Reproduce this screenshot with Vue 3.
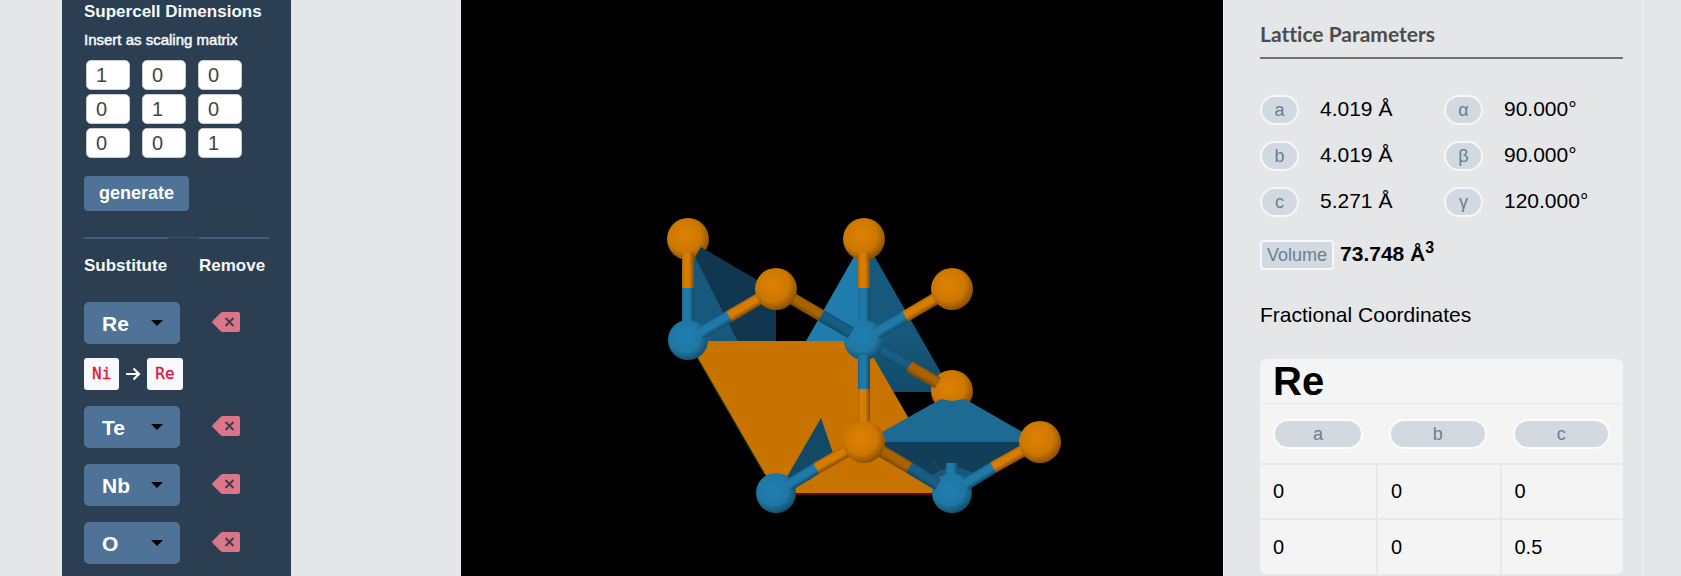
<script setup>
import { reactive } from 'vue'

const matrix = reactive([
  [1, 0, 0],
  [0, 1, 0],
  [0, 0, 1],
])

const elements = ['Re', 'Te', 'Nb', 'O', 'Ni']
const sites = reactive([
  { symbol: 'Re', from: 'Ni' },
  { symbol: 'Te' },
  { symbol: 'Nb' },
  { symbol: 'O' },
])

const lattice = [
  { edge: 'a', length: '4.019 Å', angle: 'α', degrees: '90.000°' },
  { edge: 'b', length: '4.019 Å', angle: 'β', degrees: '90.000°' },
  { edge: 'c', length: '5.271 Å', angle: 'γ', degrees: '120.000°' },
]

const coordinates = [
  ['0', '0', '0'],
  ['0', '0', '0.5'],
]

// Half bonds, atoms and faces in painting order, back to front.
const bond = (x1, y1, x2, y2, tone) => {
  const dx = x2 - x1
  const dy = y2 - y1
  return {
    kind: 'bond',
    x: x1,
    y: y1,
    length: Math.hypot(dx, dy),
    angle: (Math.atan2(dy, dx) * 180) / Math.PI,
    fill: `url(#bond-${tone})`,
  }
}
const atom = (x, y, tone) => ({ kind: 'atom', x, y, r: tone === 'orange' ? 21 : 20, fill: `url(#atom-${tone})` })
const face = (points, fill) => ({ kind: 'face', points, fill })

const scene = [
  face('694,254 738,341 688,341 688,254', '#17597d'),
  atom(688, 239, 'orange'),
  face('701,247 776,291 776,341 738,341 695,257', '#10374f'),
  face('864,239 864,341 806,341', '#1f7cac'),
  face('864,238 952,392 884,392 864,339', 'url(#face-right)'),
  face('688,341 864,341 952,493 776,493', '#c87300'),
  face('821,418 834,456 810,480 784,482', '#114966'),
  bond(688, 322, 688, 287, 'blue'),
  bond(688, 287, 688, 253, 'orange'),
  atom(688, 340, 'blue'),
  bond(701, 333, 730, 316, 'blue'),
  bond(730, 316, 764, 296, 'orange'),
  bond(788, 296, 822, 316, 'orange-dark'),
  atom(776, 289, 'orange'),
  atom(864, 239, 'orange'),
  bond(864, 324, 864, 287, 'blue'),
  bond(864, 287, 864, 253, 'orange'),
  bond(876, 347, 910, 367, 'blue-dark'),
  atom(864, 340, 'blue'),
  bond(822, 316, 851, 333, 'blue-dark'),
  bond(877, 333, 906, 316, 'blue'),
  bond(906, 316, 940, 296, 'orange'),
  atom(952, 289, 'orange'),
  atom(952, 391, 'orange'),
  bond(910, 367, 938, 383, 'orange-dark'),
  bond(864, 389, 864, 355, 'blue'),
  bond(864, 428, 864, 389, 'orange'),
  face('864,442 941,399 952,401 965,399 1040,442', '#1d6a93'),
  face('864,442 1040,442 952,493', '#113f5a'),
  face('932,475 952,465 976,474 964,485 940,485', '#17597d'),
  bond(952, 478, 952, 463, 'blue'),
  atom(776, 493, 'blue'),
  bond(789, 485, 817, 468, 'blue'),
  bond(817, 468, 852, 448, 'orange'),
  bond(876, 448, 910, 468, 'orange-dark'),
  atom(864, 442, 'orange'),
  atom(952, 493, 'blue'),
  bond(910, 468, 938, 485, 'blue-dark'),
  bond(966, 484, 994, 467, 'blue'),
  bond(994, 467, 1028, 448, 'orange'),
  atom(1040, 442, 'orange'),
]

const atomTones = [
  { id: 'atom-orange', light: '#df8200', mid: '#cc7700', dark: '#7c4800' },
  { id: 'atom-blue', light: '#217fb0', mid: '#1e77a5', dark: '#124763' },
]
const bondTones = [
  { id: 'bond-orange', edge: '#ad6500', light: '#d67c00', dark: '#824b00' },
  { id: 'bond-orange-dark', edge: '#8c5200', light: '#a86200', dark: '#7c4900' },
  { id: 'bond-blue', edge: '#196690', light: '#1f7aaa', dark: '#134c69' },
  { id: 'bond-blue-dark', edge: '#144f70', light: '#185e84', dark: '#124966' },
]
</script>

<template>
  <div class="page">
    <aside class="sidebar">
      <h2 class="side-title">Supercell Dimensions</h2>
      <p class="hint">Insert as scaling matrix</p>
      <div class="matrix">
        <template v-for="(row, r) in matrix" :key="r">
          <input
            v-for="(cell, c) in row"
            :key="c"
            v-model="matrix[r][c]"
            type="text"
            :aria-label="`Row ${r + 1}, column ${c + 1}`"
          />
        </template>
      </div>
      <button type="button" class="generate">generate</button>

      <div class="site-head">
        <h3>Substitute</h3>
        <h3>Remove</h3>
      </div>
      <div class="sites">
        <div v-for="(site, i) in sites" :key="i" class="site">
          <div class="site-row">
            <div class="picker">
              <select v-model="site.symbol" aria-label="Substitute element">
                <option v-for="name in elements" :key="name">{{ name }}</option>
              </select>
              <svg class="caret" viewBox="0 0 12 6" aria-hidden="true"><path d="M0 0h12L6 6z" /></svg>
            </div>
            <button type="button" class="remove" aria-label="Remove">
              <svg viewBox="0 0 28 20" aria-hidden="true">
                <path d="M11 0h15q2 0 2 2v16q0 2-2 2H11q-1.500 0-2.500-1L.6 11q-1-1 0-2L8.500 1Q9.500 0 11 0z" fill="#dc7587" />
                <path d="M13.500 6l8 8m0-8l-8 8" stroke="#3c3b50" stroke-width="1.800" />
              </svg>
            </button>
          </div>
          <div v-if="site.from" class="change">
            <code>{{ site.from }}</code>
            <svg viewBox="0 0 16 14" aria-hidden="true">
              <path d="M1 7h13M8.500 1.500L14 7l-5.500 5.500" fill="none" stroke="#fff" stroke-width="2.200" />
            </svg>
            <code>{{ site.symbol }}</code>
          </div>
        </div>
      </div>
    </aside>

    <main class="viewer">
      <svg viewBox="461 0 762 576" role="img" aria-label="Crystal structure">
        <defs>
          <radialGradient v-for="t in atomTones" :id="t.id" :key="t.id" cx="0.42" cy="0.4" r="0.66">
            <stop offset="0" :stop-color="t.light" />
            <stop offset="0.6" :stop-color="t.mid" />
            <stop offset="1" :stop-color="t.dark" />
          </radialGradient>
          <linearGradient v-for="t in bondTones" :id="t.id" :key="t.id" x1="0" y1="0" x2="0" y2="1">
            <stop offset="0" :stop-color="t.edge" />
            <stop offset="0.2" :stop-color="t.light" />
            <stop offset="0.6" :stop-color="t.light" />
            <stop offset="1" :stop-color="t.dark" />
          </linearGradient>
          <linearGradient id="face-right" x1="0" y1="0" x2="0" y2="1">
            <stop offset="0.6" stop-color="#16597c" />
            <stop offset="1" stop-color="#124b69" />
          </linearGradient>
        </defs>
        <template v-for="(s, i) in scene" :key="i">
          <circle v-if="s.kind === 'atom'" :cx="s.x" :cy="s.y" :r="s.r" :fill="s.fill" />
          <polygon v-else-if="s.kind === 'face'" :points="s.points" :fill="s.fill" />
          <rect
            v-else
            :transform="`translate(${s.x} ${s.y}) rotate(${s.angle})`"
            x="-1"
            y="-6"
            :width="s.length + 1"
            height="12"
            rx="1"
            :fill="s.fill"
          />
        </template>
        <path d="M698 359l67 116" stroke="#2a4a00" />
        <path d="M796 494h137" stroke="#961c00" />
        <path d="M933 460l10 17" stroke="#4a4a42" />
      </svg>
    </main>

    <section class="details">
      <h2 class="heading">Lattice Parameters</h2>
      <dl class="lattice">
        <div v-for="p in lattice" :key="p.edge" class="lattice-row">
          <div class="pair">
            <dt class="badge">{{ p.edge }}</dt>
            <dd>{{ p.length }}</dd>
          </div>
          <div class="pair">
            <dt class="badge">{{ p.angle }}</dt>
            <dd>{{ p.degrees }}</dd>
          </div>
        </div>
      </dl>
      <p class="volume">
        <span class="volume-label">Volume</span>
        <strong>73.748 Å<sup>3</sup></strong>
      </p>
      <h3 class="subheading">Fractional Coordinates</h3>
      <table class="coords">
        <colgroup>
          <col class="first" />
          <col />
          <col />
        </colgroup>
        <thead>
          <tr>
            <th colspan="3" class="species">Re</th>
          </tr>
          <tr class="axes">
            <th v-for="axis in ['a', 'b', 'c']" :key="axis"><span>{{ axis }}</span></th>
          </tr>
        </thead>
        <tbody>
          <tr v-for="(row, i) in coordinates" :key="i">
            <td v-for="(value, j) in row" :key="j">{{ value }}</td>
          </tr>
        </tbody>
      </table>
    </section>
  </div>
</template>

<style>
body {
  background: #e4e6e8;
}
</style>

<style scoped>
* {
  box-sizing: border-box;
}
.page {
  display: grid;
  grid-template-columns: 229px minmax(0, 1fr) 421px;
  padding: 0 37px 0 62px;
  min-height: 100vh;
  font-family: "Liberation Sans", Arial, sans-serif;
  color: #000;
}
h2,
h3,
p,
dl,
dd {
  margin: 0;
}
.sidebar {
  padding: 1px 22px 12px;
  background: #2c3e52;
  color: #f6f8fa;
}
.side-title,
.site-head h3 {
  font-size: 17px;
  line-height: 22px;
}
.hint {
  margin-top: 7px;
  font-size: 15px;
  line-height: 20px;
  white-space: nowrap;
  -webkit-text-stroke: 0.5px #f6f8fa;
}
.matrix {
  display: grid;
  grid-template-columns: repeat(3, 44px);
  gap: 4px 12px;
  margin: 10px 0 0 2px;
}
.matrix input {
  width: 100%;
  height: 30px;
  padding: 0 9px;
  border: 1px solid #ccc;
  border-radius: 5px;
  background: #fff;
  font: 20px "Liberation Sans", Arial, sans-serif;
  color: #444;
}
.generate {
  display: block;
  height: 35px;
  margin-top: 18px;
  padding: 0 15px;
  border: 0;
  border-radius: 4px;
  background: #4f7297;
  color: #fff;
  font: bold 18px "Liberation Sans", Arial, sans-serif;
}
.site-head {
  display: grid;
  grid-template-columns: 84px 70px;
  column-gap: 31px;
  margin-top: 26px;
  background: linear-gradient(#34516d, #34516d) top / 100% 1px no-repeat;
}
.site-head h3 {
  padding-top: 16px;
  border-top: 2px solid #3e5f80;
  white-space: nowrap;
}
.sites {
  display: grid;
  gap: 16px;
  margin-top: 25px;
}
.site-row {
  display: flex;
  align-items: center;
  gap: 32px;
}
.picker {
  position: relative;
  width: 96px;
}
.picker select {
  display: block;
  width: 100%;
  height: 42px;
  padding: 0 18px;
  border: 0;
  border-radius: 5px;
  appearance: none;
  background: #4f7297;
  color: #fff;
  font: bold 21px "Liberation Sans", Arial, sans-serif;
}
.caret {
  position: absolute;
  top: 18px;
  right: 17px;
  width: 12px;
  height: 6px;
  pointer-events: none;
}
.remove {
  padding: 0 0 3px;
  border: 0;
  background: none;
}
.remove svg {
  display: block;
  width: 28px;
  height: 20px;
}
.change {
  display: flex;
  align-items: center;
  gap: 6px;
  margin-top: 14px;
}
.change code {
  padding: 0 8px;
  border-radius: 3px;
  background: #f9f8fb;
  color: #e0123f;
  font: 16px/32px "DejaVu Sans Mono", monospace;
  -webkit-text-stroke: 0.3px #e0123f;
}
.change svg {
  width: 16px;
  height: 14px;
}
.viewer {
  margin-left: 170px;
  background: #000;
}
.viewer svg {
  display: block;
  width: 100%;
}
.details {
  padding: 20px 19px 0 36px;
  border-left: 1px solid #f2f3f4;
  border-right: 2px solid #ebecec;
}
.heading {
  padding-bottom: 9px;
  border-bottom: 2px solid #6d7272;
  color: #4b4c4e;
  font: bold 21px/28px Lato, sans-serif;
  font-variant-ligatures: none;
}
.lattice {
  display: grid;
  gap: 16px;
  margin-top: 36px;
}
.lattice-row {
  display: grid;
  grid-template-columns: 184px 1fr;
}
.pair {
  display: flex;
  align-items: center;
  gap: 21px;
  font-size: 21px;
  line-height: 26px;
}
.pair dd {
  padding-bottom: 2px;
}
.badge,
.volume-label {
  border: 2px solid #f6f7f8;
  background: #d2d9e0;
  color: #6c7f8e;
  font-size: 18px;
  line-height: 26px;
  text-align: center;
}
.badge {
  width: 39px;
  border-radius: 15px;
}
.volume {
  display: flex;
  align-items: center;
  gap: 6px;
  margin-top: 23px;
  font-size: 21px;
  line-height: 24px;
}
.volume strong {
  padding-bottom: 3px;
}
.volume-label {
  padding: 0 5px;
  border-radius: 4px;
}
.volume sup {
  font-size: 16px;
  line-height: 0;
}
.subheading {
  margin-top: 31px;
  font-size: 21px;
  font-weight: 400;
  line-height: 28px;
}
.coords {
  width: 100%;
  margin-top: 30px;
  border-spacing: 0;
  border-collapse: separate;
  table-layout: fixed;
  background: #f4f4f5;
  border-radius: 6px;
  font-size: 20px;
}
.coords .first {
  width: 116px;
}
.coords th,
.coords td {
  padding: 0 13px;
  text-align: left;
}
.coords .species {
  height: 45px;
  border-bottom: 1px solid #e6e8ea;
  font-size: 40px;
  line-height: 44px;
}
.axes th {
  height: 61px;
  border-bottom: 2px solid #e6e8ea;
}
.axes span {
  display: block;
  border: 2px solid #fcfcfd;
  border-radius: 15px;
  background: #d2d9e0;
  color: #6c7f8e;
  font-size: 18px;
  font-weight: 400;
  line-height: 26px;
  text-align: center;
}
.coords td {
  height: 55px;
  border-bottom: 2px solid #e6e8ea;
}
.coords tr:last-child td {
  height: 54px;
  border-bottom: 0;
}
.coords td + td {
  border-left: 2px solid #e6e8ea;
}
</style>
